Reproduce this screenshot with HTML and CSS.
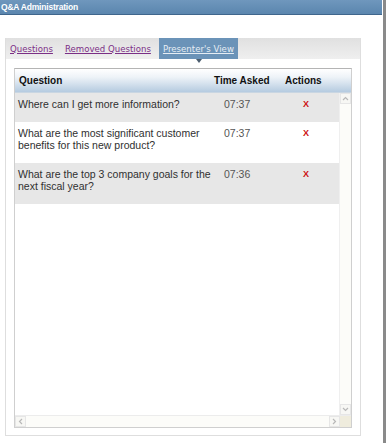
FILE: index.html
```html
<!DOCTYPE html>
<html>
<head>
<meta charset="utf-8">
<link rel="stylesheet" href="styles.css">
</head>
<body>
<div class="window">
  <div class="titlebar">Q&amp;A Administration</div>
  <div class="content">
    <div class="panel">
      <div class="tabs">
        <a class="tab">Questions</a>
        <a class="tab">Removed Questions</a>
        <a class="tab active">Presenter's View</a>
      </div>
      <div class="panel-body">
        <div class="grid-box">
          <div class="grid-head">
            <div class="hcell">Question</div>
            <div class="hcell">Time Asked</div>
            <div class="hcell">Actions</div>
          </div>
          <div class="grid-main">
            <div class="rows">
              <div class="row alt">
                <div class="q">Where can I get more information?</div>
                <div class="t">07:37</div>
                <div class="a">X</div>
              </div>
              <div class="row">
                <div class="q">What are the most significant customer benefits for this new product?</div>
                <div class="t">07:37</div>
                <div class="a">X</div>
              </div>
              <div class="row alt">
                <div class="q">What are the top 3 company goals for the next fiscal year?</div>
                <div class="t">07:36</div>
                <div class="a">X</div>
              </div>
            </div>
            <div class="vscroll">
              <div class="sbtn"><svg width="9" height="9" viewBox="0 0 9 9"><path d="M2 6 L4.5 3.5 L7 6" fill="none" stroke="#b8b8b8" stroke-width="1.2"/></svg></div>
              <div class="strack"></div>
              <div class="sbtn"><svg width="9" height="9" viewBox="0 0 9 9"><path d="M2 3 L4.5 5.5 L7 3" fill="none" stroke="#b8b8b8" stroke-width="1.2"/></svg></div>
            </div>
          </div>
          <div class="hscroll">
            <div class="sbtn"><svg width="9" height="9" viewBox="0 0 9 9"><path d="M6 2 L3.5 4.5 L6 7" fill="none" stroke="#b8b8b8" stroke-width="1.2"/></svg></div>
            <div class="htrack"></div>
            <div class="sbtn"><svg width="9" height="9" viewBox="0 0 9 9"><path d="M3 2 L5.5 4.5 L3 7" fill="none" stroke="#b8b8b8" stroke-width="1.2"/></svg></div>
            <div class="corner"></div>
          </div>
        </div>
      </div>
    </div>
  </div>
</div>
</body>
</html>
```

FILE: styles.css
```css
html, body {
  margin: 0;
  padding: 0;
  background: #ffffff;
}
body {
  width: 386px;
  height: 443px;
  overflow: hidden;
  font-family: "Liberation Sans", Arial, sans-serif;
}
.window {
  width: 383px;
  height: 443px;
  border-right: 3px solid #8a8a8a;
  display: flex;
  flex-direction: column;
}
.titlebar {
  height: 14px;
  margin-right: 1px;
  background: linear-gradient(#6f97bd, #5b86ae);
  border-bottom: 1px solid #3f668c;
  color: #ffffff;
  font-weight: bold;
  font-size: 8.5px;
  letter-spacing: -0.2px;
  line-height: 14px;
  padding-left: 1px;
}
.content {
  flex: 1;
  padding: 23px 0 0 5px;
}
.panel {
  width: 354px;
  height: 397px;
  border: 1px solid #dedede;
  border-top: none;
  display: flex;
  flex-direction: column;
}
.tabs {
  height: 21px;
  background: linear-gradient(#e0e0e0, #efefef);
  display: flex;
  gap: 4px;
}
.tab {
  padding: 0 4px;
  display: flex;
  align-items: center;
  font-family: "DejaVu Sans", Verdana, sans-serif;
  font-size: 8.6px;
  color: #7b2f86;
  text-decoration: underline;
  position: relative;
}
.tab.active {
  background: #6b93b8;
  color: #e6edf4;
}
.tab.active::after {
  content: "";
  position: absolute;
  left: 37px;
  bottom: -4px;
  border-left: 3px solid transparent;
  border-right: 3px solid transparent;
  border-top: 4px solid #4c5e70;
}
.panel-body {
  flex: 1;
  padding: 9px 8px 7px 8px;
  display: flex;
}
.grid-box {
  flex: 1;
  border: 1px solid #cfcfcf;
  border-top-color: #b4b4b4;
  display: flex;
  flex-direction: column;
}
.grid-head {
  height: 23px;
  background: linear-gradient(#ffffff, #eef3f8 35%, #b5cbe0);
  display: grid;
  grid-template-columns: 199px 71px 1fr;
  align-items: center;
  font-weight: bold;
  font-size: 10px;
  color: #111111;
  border-bottom: 1px solid #c9d6e2;
}
.hcell:first-child {
  padding-left: 4px;
}
.grid-main {
  flex: 1;
  display: flex;
  min-height: 0;
}
.rows {
  flex: 1;
  background: #ffffff;
}
.row {
  display: grid;
  grid-template-columns: 207px 79px 1fr;
  font-size: 10.5px;
  line-height: 12px;
  padding: 5px 0 12px 0;
}
.row.alt {
  background: #e7e7e7;
}
.row .q {
  padding: 0 8px 0 3px;
  color: #303030;
}
.row .t {
  padding-left: 2px;
  color: #555555;
}
.row .a {
  padding-left: 2px;
  color: #cc1111;
  font-weight: bold;
  font-size: 9px;
}
.vscroll {
  width: 11px;
  display: flex;
  flex-direction: column;
  background: #fcfcf9;
  border-left: 1px solid #efefef;
}
.sbtn {
  width: 11px;
  height: 11px;
  display: flex;
  align-items: center;
  justify-content: center;
  background: #f7f7f4;
  border: 1px solid #e6e6e6;
  box-sizing: border-box;
}
.strack {
  flex: 1;
}
.hscroll {
  height: 11px;
  display: flex;
  background: #fcfcf9;
  border-top: 1px solid #ececec;
}
.htrack {
  flex: 1;
}
.corner {
  width: 11px;
  background: #efecdd;
}
```
